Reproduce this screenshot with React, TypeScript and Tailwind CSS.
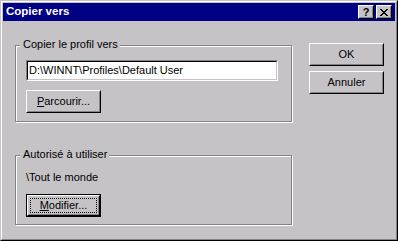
const FACE = "bg-[#c6c3c6]";

function Raised({ children, className = "" }: { children: React.ReactNode; className?: string }) {
  return (
    <div className={`${FACE} border border-t-white border-l-white border-r-black border-b-black ${className}`}>
      <div className="h-full border border-t-[#c6c3c6] border-l-[#c6c3c6] border-r-[#848284] border-b-[#848284] flex items-center justify-center">
        {children}
      </div>
    </div>
  );
}

function Button({ children, isDefault }: { children: React.ReactNode; isDefault?: boolean }) {
  if (isDefault) {
    return (
      <div className="w-[75px] h-[23px] border border-black">
        <Raised className="h-full">
          <span className="m-px self-stretch flex-1 flex items-center justify-center border border-dotted border-black">
            {children}
          </span>
        </Raised>
      </div>
    );
  }
  return <Raised className="w-[75px] h-[23px]">{children}</Raised>;
}

function Group({ label, children, className = "" }: { label: string; children: React.ReactNode; className?: string }) {
  return (
    <fieldset
      className={`w-[277px] border border-[#848284] shadow-[1px_1px_0_#fff,inset_1px_1px_0_#fff] ${className}`}
    >
      <legend className={`ml-[4px] pl-[3px] pr-[2px] pb-[2px] leading-[13px] ${FACE}`}>{label}</legend>
      <div className="pl-[10px]">{children}</div>
    </fieldset>
  );
}

export default function App() {
  return (
    <div className={`w-[398px] h-[241px] ${FACE} font-['Liberation_Sans',Arial,sans-serif] text-[11px] text-black`}>
      <div className="h-full border border-t-[#c6c3c6] border-l-[#c6c3c6] border-r-black border-b-black">
        <div className="h-full border border-t-white border-l-white border-r-[#848284] border-b-[#848284] p-px flex flex-col">
          <div className="h-[18px] bg-[#000084] flex items-center pl-[3px] pr-[3px]">
            <span className="flex-1 text-white font-bold text-[11.5px] leading-none">Copier vers</span>
            <Raised className="w-[16px] h-[14px]">
              <span className="font-bold text-[11px] leading-none">?</span>
            </Raised>
            <Raised className="w-[16px] h-[14px] ml-[2px]">
              <svg width="8" height="7" viewBox="0 0 8 7" shapeRendering="crispEdges">
                <path
                  fill="#000"
                  d="M0 0h2v1H0zM6 0h2v1H6zM1 1h2v1H1zM5 1h2v1H5zM2 2h4v1H2zM3 3h2v1H3zM2 4h4v1H2zM1 5h2v1H1zM5 5h2v1H5zM0 6h2v1H0zM6 6h2v1H6z"
                />
              </svg>
            </Raised>
          </div>

          <div className="flex pl-[12px]">
            <div className="flex flex-col pt-[17px]">
              <Group label="Copier le profil vers">
                <div className="mt-[7px] w-[252px] h-[21px] border border-t-[#848284] border-l-[#848284] border-r-white border-b-white">
                  <div className="h-full bg-white border border-t-black border-l-black border-r-[#c6c3c6] border-b-[#c6c3c6] flex items-center pl-px">
                    D:\WINNT\Profiles\Default User
                  </div>
                </div>
                <div className="mt-[9px] mb-[8px]">
                  <Button>
                    <span className="underline">P</span>arcourir...
                  </Button>
                </div>
              </Group>

              <Group label="Autorisé à utiliser" className="mt-[26px]">
                <div className="mt-[8px] leading-[13px]">\Tout le monde</div>
                <div className="mt-[10px] mb-[7px]">
                  <Button isDefault>
                    <span className="underline">M</span>odifier...
                  </Button>
                </div>
              </Group>
            </div>

            <div className="ml-[17px] pt-[22px] flex flex-col gap-[5px]">
              <Button>OK</Button>
              <Button>Annuler</Button>
            </div>
          </div>
        </div>
      </div>
    </div>
  );
}
